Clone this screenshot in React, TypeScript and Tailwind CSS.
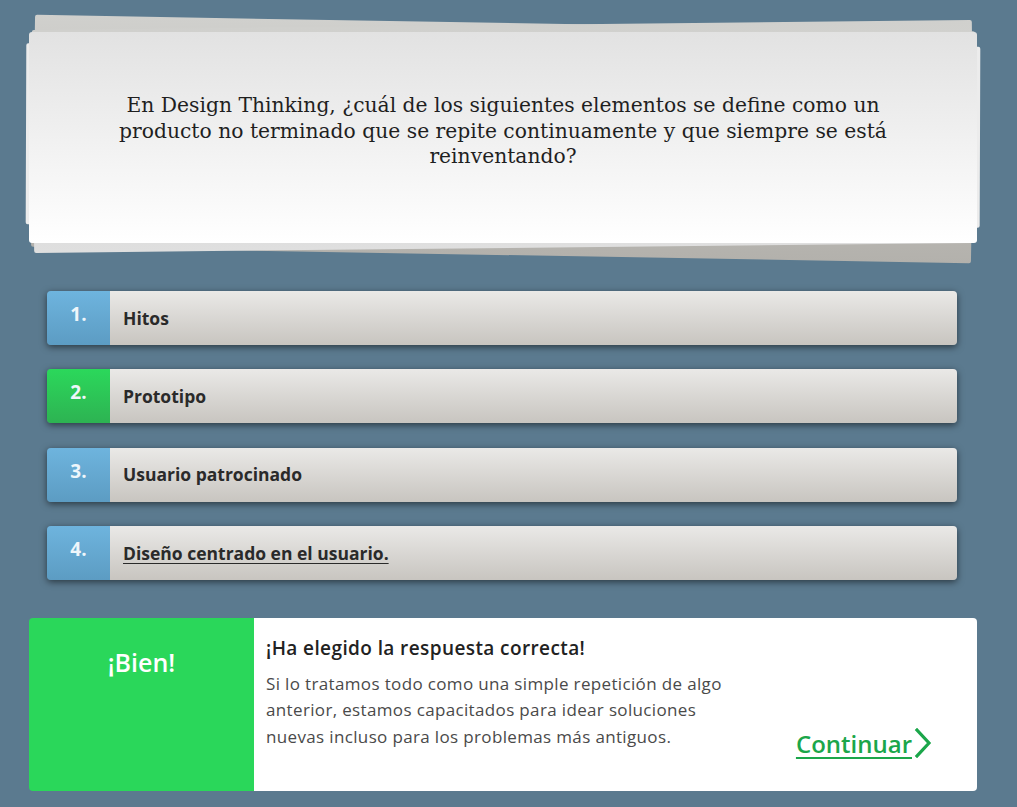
const options = [
  { n: "1.", label: "Hitos", correct: false },
  { n: "2.", label: "Prototipo", correct: true },
  { n: "3.", label: "Usuario patrocinado", correct: false },
  { n: "4.", label: "Diseño centrado en el usuario.", correct: false, hover: true },
];

function QuestionPaper() {
  return (
    <div className="relative mt-[31px]">
      {/* hojas de fondo */}
      <div className="absolute left-[4px] right-[4px] -top-[9px] -bottom-[12px] rotate-[1deg] bg-gradient-to-b from-[#d0d0cd] to-[#b3b1ac] rounded-[2px]" />
      <div className="absolute left-[4px] right-[4px] -top-[7px] -bottom-[5px] -rotate-[0.6deg] bg-gradient-to-b from-[#d0d0cd] to-[#dfdfdf] rounded-[2px]" />
      <div className="absolute -left-[3px] -right-[3px] top-[13px] bottom-[17px] rotate-[0.2deg] bg-[#ececec] rounded-[2px]" />

      <div className="relative h-[211px] rounded-[3px] bg-gradient-to-b from-[#e2e2e2] to-[#ffffff] flex items-center justify-center px-[50px] pb-[12px]">
        <p className="text-center text-[20.3px] leading-[25.5px] text-[#1f1f1f] font-['DejaVu_Serif',serif] max-w-[800px]">
          En Design Thinking, ¿cuál de los siguientes elementos se define como un
          producto no terminado que se repite continuamente y que siempre se está
          reinventando?
        </p>
      </div>
    </div>
  );
}

function OptionRow({ n, label, correct, hover }: { n: string; label: string; correct: boolean; hover?: boolean }) {
  return (
    <div className="flex h-[54px] rounded-[4px] overflow-hidden shadow-[0_2px_7px_rgba(0,0,0,0.55)]">
      <div
        className={
          correct
            ? "w-[63px] flex justify-center pt-[9px] bg-gradient-to-b from-[#2bd85b] to-[#2db352]"
            : "w-[63px] flex justify-center pt-[9px] bg-gradient-to-b from-[#6eb4de] to-[#5c9cc3]"
        }
      >
        <span className="text-[19px] font-bold text-[#eef6fb] font-['Open_Sans',sans-serif]">{n}</span>
      </div>
      <div className="flex-1 flex items-center pl-[13px] bg-gradient-to-b from-[#eae9e7] to-[#c8c5c0]">
        <span
          className={
            hover
              ? "text-[17.5px] font-bold text-[#2a2a2a] font-['Open_Sans',sans-serif] underline underline-offset-[3px]"
              : "text-[17.5px] font-bold text-[#2a2a2a] font-['Open_Sans',sans-serif]"
          }
        >
          {label}
        </span>
      </div>
    </div>
  );
}

function Feedback() {
  return (
    <div className="flex h-[173px] mt-[38px] rounded-[4px] overflow-hidden font-['Open_Sans',sans-serif]">
      <div className="w-[225px] bg-[#2ad75a] flex justify-center pt-[26px]">
        <span className="text-[25px] font-semibold text-white">¡Bien!</span>
      </div>
      <div className="flex-1 bg-white flex pl-[12px] pr-[44px]">
        <div className="w-[475px] pt-[16px]">
          <h3 className="text-[19px] font-semibold text-[#222] leading-[28px] tracking-[0.4px]">¡Ha elegido la respuesta correcta!</h3>
          <p className="mt-[9px] text-[17px] leading-[26.5px] text-[#4a4a4a] tracking-[0.35px]">
            Si lo tratamos todo como una simple repetición de algo anterior, estamos capacitados para idear soluciones
            nuevas incluso para los problemas más antiguos.
          </p>
        </div>
        <div className="flex-1 flex items-end justify-end pb-[33px]">
          <a className="flex items-center text-[#1ba64a] text-[24px] font-semibold leading-none cursor-pointer">
            <span className="underline underline-offset-[4px] decoration-2">Continuar</span>
            <svg width="20" height="30" viewBox="0 0 20 30" className="ml-[1px] -mt-[2px]" fill="none">
              <polyline points="4,2 16,15 4,28" stroke="#1ba64a" strokeWidth="3.2" strokeLinecap="square" />
            </svg>
          </a>
        </div>
      </div>
    </div>
  );
}

export default function App() {
  return (
    <div className="min-h-screen bg-[#5b7a8f] pt-px">
      <div className="w-[948px] ml-[29px]">
        <QuestionPaper />
        <div className="mt-[48px] ml-[18px] mr-[20px] flex flex-col gap-[24.3px]">
          {options.map((o) => (
            <OptionRow key={o.n} {...o} />
          ))}
        </div>
        <Feedback />
      </div>
    </div>
  );
}
